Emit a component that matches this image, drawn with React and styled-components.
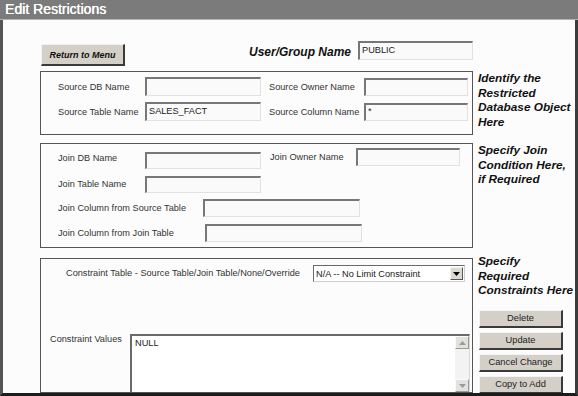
import React from 'react';
import styled, {createGlobalStyle} from 'styled-components';

const GlobalStyle = createGlobalStyle`
    html, body {
        margin: 0;
        padding: 0;
        background: #fff;
    }
    body {
        font-family: "Liberation Sans", Arial, sans-serif;
    }
`;

const App = () => {
    return (
        <>
            <GlobalStyle/>
            <Frame>
                <TitleBar>Edit Restrictions</TitleBar>
                <Body>
                    <TopRow>
                        <MenuButton>Return to Menu</MenuButton>
                        <UserGroup>
                            <BigLabel>User/Group Name</BigLabel>
                            <Field readOnly value="PUBLIC" $w={115} $h={19}/>
                        </UserGroup>
                    </TopRow>

                    {/* 원본 객체 */}
                    <Section $top={5}>
                        <SourceBox>
                            <Label>Source DB Name</Label>
                            <Field readOnly value="" $w={116} $h={19}/>
                            <Label $pad={8}>Source Owner Name</Label>
                            <Field readOnly value="" $w={104} $h={18}/>
                            <Label>Source Table Name</Label>
                            <Field readOnly value="SALES_FACT" $w={116} $h={19}/>
                            <Label $pad={8}>Source Column Name</Label>
                            <Field readOnly value="*" $w={104} $h={18}/>
                        </SourceBox>
                        <Note>Identify the<br/>Restricted<br/>Database Object<br/>Here</Note>
                    </Section>

                    {/* 조인 조건 */}
                    <Section $top={8}>
                        <JoinBox>
                            <FieldRow>
                                <Label $w={87} $mt={2} $lh={17}>Join DB Name</Label>
                                <Field readOnly value="" $w={116} $h={17} $mt={4}/>
                                <Label $w={86} $ml={9} $lh={18}>Join Owner Name</Label>
                                <Field readOnly value="" $w={104} $h={18}/>
                            </FieldRow>
                            <FieldRow $mt={7}>
                                <Label $w={87} $lh={17}>Join Table Name</Label>
                                <Field readOnly value="" $w={116} $h={17}/>
                            </FieldRow>
                            <FieldRow $mt={6}>
                                <Label $w={145} $lh={18}>Join Column from Source Table</Label>
                                <Field readOnly value="" $w={157} $h={18}/>
                            </FieldRow>
                            <FieldRow $mt={7}>
                                <Label $w={147} $lh={18}>Join Column from Join Table</Label>
                                <Field readOnly value="" $w={157} $h={18}/>
                            </FieldRow>
                        </JoinBox>
                        <Note>Specify Join<br/>Condition Here,<br/>if Required</Note>
                    </Section>

                    {/* 제약 조건 */}
                    <Section $top={10} $grow>
                        <ConstraintBox>
                            <ConstraintRow>
                                <Label $w={247} $lh={17}>Constraint Table - Source Table/Join Table/None/Override</Label>
                                <SelectBox>
                                    <SelectText>N/A -- No Limit Constraint</SelectText>
                                    <DropButton>
                                        <svg width="7" height="4" viewBox="0 0 7 4">
                                            <path d="M0 0h7L3.5 4z" fill="#000"/>
                                        </svg>
                                    </DropButton>
                                </SelectBox>
                            </ConstraintRow>
                            <ValuesRow>
                                <Label $w={80} $lh={11}>Constraint Values</Label>
                                <TextBox>
                                    <TextContent>NULL</TextContent>
                                    <ScrollBar>
                                        <ScrollArrow>
                                            <svg width="7" height="4" viewBox="0 0 7 4">
                                                <path d="M0 4h7L3.5 0z" fill="#9a9a9a"/>
                                            </svg>
                                        </ScrollArrow>
                                        <ScrollTrack/>
                                        <ScrollArrow>
                                            <svg width="7" height="4" viewBox="0 0 7 4">
                                                <path d="M0 0h7L3.5 4z" fill="#9a9a9a"/>
                                            </svg>
                                        </ScrollArrow>
                                    </ScrollBar>
                                </TextBox>
                            </ValuesRow>
                        </ConstraintBox>
                        <SideColumn>
                            <Note $mt={-4}>Specify<br/>Required<br/>Constraints Here</Note>
                            <ButtonStack>
                                <ActionButton>Delete</ActionButton>
                                <ActionButton>Update</ActionButton>
                                <ActionButton>Cancel Change</ActionButton>
                                <ActionButton>Copy to Add</ActionButton>
                            </ButtonStack>
                        </SideColumn>
                    </Section>
                </Body>
            </Frame>
        </>
    );
};
export default App;

const Frame = styled.div`
    width: 578px;
    height: 396px;
    overflow: hidden;
    display: flex;
    flex-direction: column;
    background: #fcfcfc;
`;

const TitleBar = styled.div`
    flex: none;
    height: 19px;
    line-height: 19px;
    padding-left: 5px;
    background: #7b7b7b;
    border-bottom: 1px solid #b4b4b4;
    color: #fff;
    font-size: 14px;
    text-shadow: 0.3px 0 0 #fff;
`;

const Body = styled.div`
    flex: 1;
    min-height: 0;
    display: flex;
    flex-direction: column;
    padding: 21px 0 0 37px;
    border-left: 3px solid #555;
    border-right: 3px solid #3c3c3c;
    border-bottom: 3px solid #1c1c1c;
    overflow: hidden;
`;

const TopRow = styled.div`
    width: 433px;
    height: 25px;
    display: flex;
    justify-content: space-between;
    align-items: flex-start;
`;

const MenuButton = styled.button`
    width: 84px;
    height: 22px;
    margin: 3px 0 0 1px;
    padding: 0;
    background: #d4d0c8;
    border-style: solid;
    border-width: 1px 2px 2px 1px;
    border-color: #f2f2f2 #3a3a3a #3a3a3a #f2f2f2;
    font-family: "Liberation Sans", Arial, sans-serif;
    font-size: 9px;
    font-weight: bold;
    font-style: italic;
    color: #111;
`;

const UserGroup = styled.div`
    display: flex;
    align-items: center;
    gap: 7px;
`;

const BigLabel = styled.span`
    font-size: 12px;
    font-weight: bold;
    font-style: italic;
    color: #111;
    padding-top: 2px;
`;

const Section = styled.div`
    display: flex;
    gap: 5px;
    margin-top: ${p => p.$top}px;
    flex: ${p => (p.$grow ? 1 : 'none')};
    min-height: 0;
`;

const Box = styled.div`
    box-sizing: border-box;
    width: 433px;
    flex: none;
    border: 1px solid #555;
`;

const SourceBox = styled(Box)`
    height: 64px;
    padding: 5px 0 0 17px;
    display: grid;
    grid-template-columns: 87px 116px 103px 104px;
    grid-template-rows: 19px 19px;
    row-gap: 6px;
    align-items: center;
`;

const JoinBox = styled(Box)`
    height: 105px;
    padding: 4px 0 0 17px;
    display: flex;
    flex-direction: column;
`;

const ConstraintBox = styled(Box)`
    padding-top: 6px;
    overflow: hidden;
    display: flex;
    flex-direction: column;
`;

const FieldRow = styled.div`
    display: flex;
    align-items: flex-start;
    margin-top: ${p => p.$mt || 0}px;
`;

const Label = styled.span`
    box-sizing: border-box;
    flex: none;
    width: ${p => (p.$w ? `${p.$w}px` : 'auto')};
    margin-left: ${p => p.$ml || 0}px;
    margin-top: ${p => p.$mt || 0}px;
    padding-left: ${p => p.$pad || 0}px;
    line-height: ${p => (p.$lh ? `${p.$lh}px` : 'normal')};
    font-size: 9.2px;
    color: #333;
    white-space: nowrap;
`;

const Field = styled.input`
    box-sizing: border-box;
    flex: none;
    width: ${p => p.$w}px;
    height: ${p => p.$h}px;
    margin: ${p => p.$mt || 0}px 0 0 0;
    padding: 0 2px 2px;
    border-style: solid;
    border-width: 2px 1px 1px 2px;
    border-color: #777 #e2e2e2 #e2e2e2 #777;
    background: #fafafa;
    font-family: "Liberation Sans", Arial, sans-serif;
    font-size: 9.2px;
    color: #222;
    outline: none;
`;

const ConstraintRow = styled.div`
    display: flex;
    align-items: center;
    padding-left: 25px;
`;

const SelectBox = styled.div`
    box-sizing: border-box;
    width: 152px;
    height: 17px;
    display: flex;
    align-items: center;
    justify-content: space-between;
    border: 1px solid;
    border-color: #6a6a6a #cfcfcf #cfcfcf #6a6a6a;
    background: #fff;
    padding: 0 1px 0 2px;
`;

const SelectText = styled.span`
    font-size: 9.2px;
    color: #222;
`;

const DropButton = styled.span`
    box-sizing: border-box;
    width: 13px;
    height: 13px;
    display: flex;
    align-items: center;
    justify-content: center;
    background: #dcd9d2;
    border-style: solid;
    border-width: 1px;
    border-color: #f4f4f4 #555 #555 #f4f4f4;
`;

const ValuesRow = styled.div`
    display: flex;
    align-items: flex-start;
    margin-top: 52px;
    padding-left: 9px;
`;

const TextBox = styled.div`
    box-sizing: border-box;
    width: 340px;
    height: 58px;
    display: flex;
    justify-content: space-between;
    border-style: solid;
    border-width: 2px 1px 0 2px;
    border-color: #6a6a6a #d8d8d8 #d8d8d8 #6a6a6a;
    background: #fff;
`;

const TextContent = styled.span`
    padding: 2px 3px;
    font-size: 9.2px;
    color: #222;
`;

const ScrollBar = styled.div`
    width: 14px;
    display: flex;
    flex-direction: column;
    background: #eeeeee;
`;

const ScrollArrow = styled.div`
    box-sizing: border-box;
    height: 13px;
    display: flex;
    align-items: center;
    justify-content: center;
    background: #e4e2dd;
    border-style: solid;
    border-width: 1px;
    border-color: #fafafa #9a9a9a #9a9a9a #fafafa;
`;

const ScrollTrack = styled.div`
    flex: 1;
    background: #f3f3f3;
`;

const Note = styled.div`
    margin-top: ${p => p.$mt || 0}px;
    font-size: 11.8px;
    line-height: 14.5px;
    font-weight: bold;
    font-style: italic;
    color: #111;
    white-space: nowrap;
`;

const SideColumn = styled.div`
    display: flex;
    flex-direction: column;
`;

const ButtonStack = styled.div`
    display: flex;
    flex-direction: column;
    gap: 4px;
    margin: 12px 0 0 1px;
`;

const ActionButton = styled.button`
    box-sizing: border-box;
    width: 84px;
    height: 18px;
    padding: 0;
    background: #d4d0c8;
    border-style: solid;
    border-width: 1px 2px 2px 1px;
    border-color: #f4f4f4 #3a3a3a #3a3a3a #f4f4f4;
    font-family: "Liberation Sans", Arial, sans-serif;
    font-size: 9.3px;
    color: #222;
`;
